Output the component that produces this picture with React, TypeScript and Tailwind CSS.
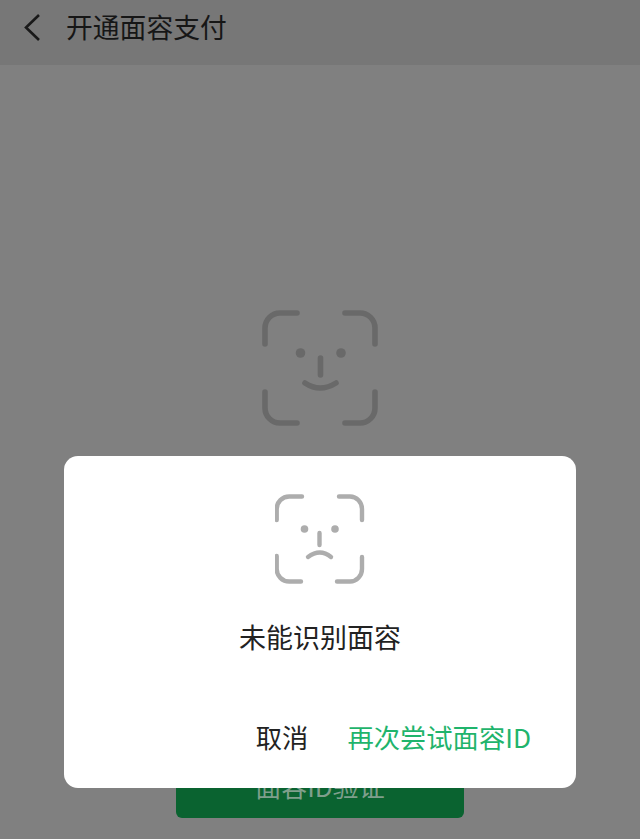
const font = { fontFamily: '"Noto Sans CJK SC", "Noto Sans", sans-serif' };

function BigFace() {
  return (
    <svg width="120" height="120" viewBox="0 0 120 120" fill="none" stroke="#696969" strokeWidth="5.6" strokeLinecap="round">
      <path d="M5 36V20A15 15 0 0 1 20 5H37" />
      <path d="M85 5H100A15 15 0 0 1 115 20V36" />
      <path d="M5 84V100A15 15 0 0 0 20 115H37" />
      <path d="M115 84V100A15 15 0 0 1 100 115H85" />
      <circle cx="40.5" cy="45" r="4.8" fill="#696969" stroke="none" />
      <circle cx="81" cy="45" r="4.8" fill="#696969" stroke="none" />
      <path d="M60.5 50V67" />
      <path d="M45 75Q60 85 76 75" />
    </svg>
  );
}

function SadFace() {
  return (
    <svg width="90" height="94" viewBox="0 0 90 94" fill="none" stroke="#adadad" strokeWidth="4.4" strokeLinecap="round">
      <path d="M1.7 28V17A12.5 12.5 0 0 1 14.2 4.5H27" />
      <path d="M64 4.5H75A12.5 12.5 0 0 1 87 17V28" />
      <path d="M1.7 64V77A12.5 12.5 0 0 0 14.2 89.5H26" />
      <path d="M87 65V77A12.5 12.5 0 0 1 75 89.5H62" />
      <circle cx="29.5" cy="37" r="3.8" fill="#adadad" stroke="none" />
      <circle cx="60" cy="37" r="3.8" fill="#adadad" stroke="none" />
      <path d="M44.5 41V53" />
      <path d="M33 65Q45 56 56 65" />
    </svg>
  );
}

export default function App() {
  return (
    <div style={font} className="relative w-[640px] h-[839px] overflow-hidden bg-[#808080] flex flex-col items-center">
      <header className="w-full h-[65px] shrink-0 bg-[#777777] flex items-center pl-[22px] pb-[10px] gap-[24px]">
        <svg width="20" height="30" viewBox="0 0 20 30" fill="none" stroke="#191919" strokeWidth="2.6">
          <path d="M17 2L4 14.5L17 27" />
        </svg>
        <h1 className="text-[26.8px] leading-none text-[#161616] font-normal">开通面容支付</h1>
      </header>
      <div className="mt-[243px] h-[120px]">
        <BigFace />
      </div>
      <button className="mt-[329px] w-[288px] h-[61px] rounded-[6px] bg-[#0a6330] pb-[4px] text-[26px] text-[#7f9f8c] flex items-center justify-center">
        面容ID验证
      </button>

      <div className="absolute left-[64px] top-[456px] w-[512px] h-[332px] rounded-[14px] bg-white flex flex-col items-center pt-[36px]">
        <SadFace />
        <p className="mt-[31px] text-[27px] leading-[40px] text-[#222222]">未能识别面容</p>
        <div className="mt-[60px] w-full flex justify-end items-center gap-[39px] pr-[45px] text-[26.3px] leading-[40px]">
          <span className="text-[#222222]">取消</span>
          <span className="text-[#1fb46c]">再次尝试面容ID</span>
        </div>
      </div>
    </div>
  );
}
